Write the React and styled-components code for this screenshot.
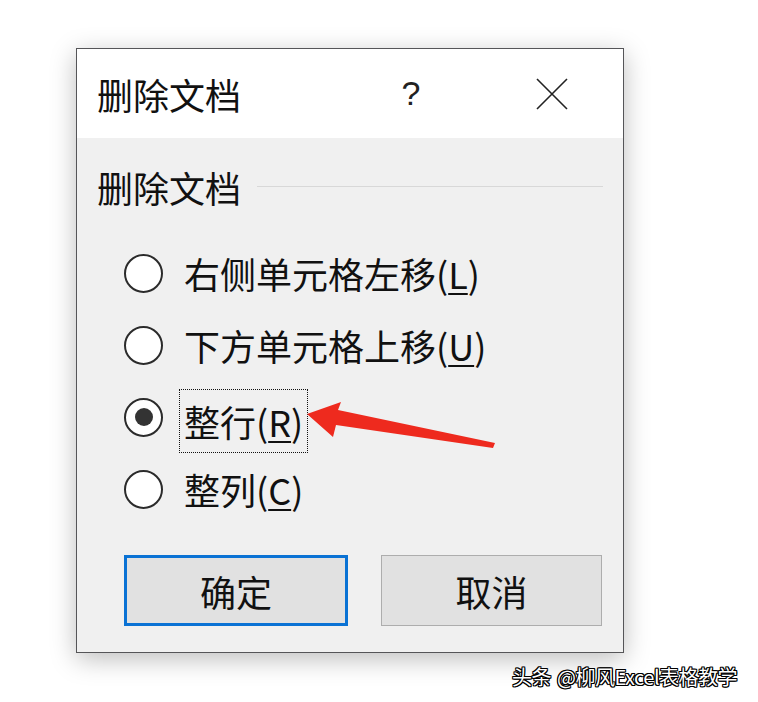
import React, { useState } from "react";
import styled, { createGlobalStyle } from "styled-components";

const GlobalStyle = createGlobalStyle`
  html, body {
    margin: 0;
    padding: 0;
    background: #ffffff;
  }
  body {
    font-family: "Noto Sans CJK SC", "Noto Sans", sans-serif;
    color: #1a1a1a;
  }
`;

const options = [
  { label: "右侧单元格左移", key: "L" },
  { label: "下方单元格上移", key: "U" },
  { label: "整行", key: "R" },
  { label: "整列", key: "C" },
];

function App() {
  const [selected, setSelected] = useState(2);

  return (
    <Page>
      <GlobalStyle />
      <Dialog>
        <TitleBar>
          <Title>删除文档</Title>
          <TitleButtons>
            <HelpButton>?</HelpButton>
            <CloseButton>
              <svg width="32" height="32" viewBox="0 0 32 32">
                <path d="M1 1 L31 31 M31 1 L1 31" stroke="#222" strokeWidth="1.6" fill="none" />
              </svg>
            </CloseButton>
          </TitleButtons>
        </TitleBar>
        <Body>
          <GroupHeader>
            <GroupLabel>删除文档</GroupLabel>
            <GroupLine />
          </GroupHeader>
          <OptionList>
            {options.map((opt, i) => (
              <OptionRow key={opt.key} onClick={() => setSelected(i)}>
                <Radio checked={selected === i} />
                <OptionText focused={selected === i}>
                  {opt.label}(<u>{opt.key}</u>)
                </OptionText>
              </OptionRow>
            ))}
          </OptionList>
          <ButtonRow>
            <Button primary>确定</Button>
            <Button>取消</Button>
          </ButtonRow>
        </Body>
        <Arrow width="200" height="60" viewBox="300 395 200 60">
          <polygon
            points="307,414 341,402 338,410 495,443 493,448 336,425 333,437"
            fill="#ee2a1e"
          />
        </Arrow>
      </Dialog>
      <Watermark>
        <span>头条</span> @柳风Excel表格教学
      </Watermark>
    </Page>
  );
}

const Page = styled.div`
  position: relative;
  width: 758px;
  height: 702px;
  padding: 48px 0 0 76px;
  box-sizing: border-box;
  overflow: hidden;
`;

const Dialog = styled.div`
  position: relative;
  width: 548px;
  height: 605px;
  box-sizing: border-box;
  border: 1px solid #555558;
  background: #f0f0f0;
  box-shadow: 0 6px 24px rgba(0, 0, 0, 0.26);
  display: flex;
  flex-direction: column;
`;

const TitleBar = styled.div`
  height: 89px;
  background: #ffffff;
  display: flex;
  align-items: center;
  justify-content: space-between;
  padding: 0 0 0 20px;
`;

const Title = styled.div`
  font-size: 36px;
  line-height: 40px;
  color: #111;
`;

const TitleButtons = styled.div`
  display: flex;
  align-items: center;
`;

const HelpButton = styled.div`
  width: 40px;
  text-align: center;
  font-family: "Liberation Sans", sans-serif;
  font-size: 34px;
  color: #222;
  margin-right: 105px;
`;

const CloseButton = styled.div`
  width: 32px;
  height: 32px;
  margin-right: 55px;
  display: flex;
`;

const Body = styled.div`
  flex: 1;
  padding: 28px 20px 0 20px;
  display: flex;
  flex-direction: column;
`;

const GroupHeader = styled.div`
  display: flex;
  align-items: center;
  height: 42px;
`;

const GroupLabel = styled.div`
  font-size: 36px;
  line-height: 42px;
  color: #111;
`;

const GroupLine = styled.div`
  flex: 1;
  height: 1px;
  background: #d8d8d8;
  margin-left: 16px;
  margin-top: -2px;
`;

const OptionList = styled.div`
  display: flex;
  flex-direction: column;
  padding: 29px 0 0 27px;
`;

const OptionRow = styled.div`
  display: flex;
  align-items: center;
  height: 72px;
  cursor: default;
`;

const Radio = styled.div`
  width: 39px;
  height: 39px;
  box-sizing: border-box;
  border-radius: 50%;
  border: 2px solid #2b2b2b;
  background: #fff;
  display: flex;
  align-items: center;
  justify-content: center;
  flex-shrink: 0;

  &::after {
    content: "";
    width: 18px;
    height: 18px;
    border-radius: 50%;
    background: #333;
    display: ${(props) => (props.checked ? "block" : "none")};
  }
`;

const OptionText = styled.div`
  margin-left: 16px;
  padding: 0 4px;
  height: 62px;
  display: flex;
  align-items: center;
  font-size: 36px;
  color: #111;
  border: 1px dotted ${(props) => (props.focused ? "#111" : "transparent")};
  margin-top: ${(props) => (props.focused ? "8px" : "0")};

  u {
    text-decoration-thickness: 2px;
    text-underline-offset: 4px;
  }
`;

const ButtonRow = styled.div`
  display: flex;
  gap: 33px;
  padding-left: 27px;
  margin-top: 30px;
`;

const Button = styled.div`
  height: 71px;
  box-sizing: border-box;
  width: ${(props) => (props.primary ? "224px" : "221px")};
  background: #e1e1e1;
  border: ${(props) => (props.primary ? "3px solid #0a72d4" : "1px solid #adadad")};
  display: flex;
  align-items: center;
  justify-content: center;
  font-size: 36px;
  color: #111;
`;

const Arrow = styled.svg`
  position: absolute;
  left: 223px;
  top: 346px;
`;

const Watermark = styled.div`
  position: absolute;
  left: 512px;
  top: 663px;
  font-size: 20px;
  line-height: 28px;
  color: #fff;
  letter-spacing: -0.5px;
  text-shadow: 1px 0 0 #000, -1px 0 0 #000, 0 1px 0 #000, 0 -1px 0 #000,
    1px 1px 0 #000, -1px -1px 0 #000, 1px -1px 0 #000, -1px 1px 0 #000;
  white-space: nowrap;

  span {
    margin-right: 2px;
  }
`;

export default App;
